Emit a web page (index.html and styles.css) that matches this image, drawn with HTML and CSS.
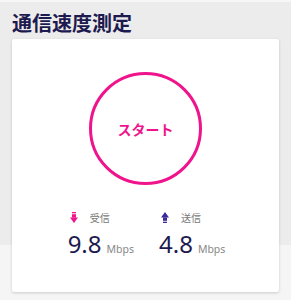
FILE: index.html
```html
<!DOCTYPE html>
<html lang="ja">
<head>
<meta charset="utf-8">
<link rel="stylesheet" href="styles.css">
</head>
<body>
<div class="page">
  <h1 class="title">通信速度測定</h1>
  <div class="card">
    <button class="start">スタート</button>
    <div class="stats">
      <div class="stat">
        <div class="label">
          <svg class="arrow" width="8" height="11" viewBox="0 0 8 11"><rect x="2" y="0" width="4" height="1.3" fill="#f0148c"/><rect x="2" y="2.2" width="4" height="3.4" fill="#f0148c"/><polygon points="0,5.6 8,5.6 4,11" fill="#f0148c"/></svg>
          <span>受信</span>
        </div>
        <div class="value"><span class="num">9.8</span><span class="unit">Mbps</span></div>
      </div>
      <div class="stat">
        <div class="label">
          <svg class="arrow" width="8" height="11" viewBox="0 0 8 11"><polygon points="4,0 8,5.4 0,5.4" fill="#3c2a9a"/><rect x="2" y="5.4" width="4" height="3.4" fill="#3c2a9a"/><rect x="2" y="9.7" width="4" height="1.3" fill="#3c2a9a"/></svg>
          <span>送信</span>
        </div>
        <div class="value"><span class="num">4.8</span><span class="unit">Mbps</span></div>
      </div>
    </div>
  </div>
</div>
</body>
</html>
```
FILE: styles.css
```css
html, body {
  margin: 0;
  padding: 0;
}
body {
  width: 291px;
  height: 300px;
  overflow: hidden;
  background: linear-gradient(#ececec 0, #ececec 245px, #f5f5f5 245px);
  font-family: "Noto Sans CJK JP", "Noto Sans", sans-serif;
}
.page {
  padding: 0 12px;
  border-top: 2px solid #f6f6f6;
}
.title {
  margin: 0;
  padding-top: 8px;
  height: 29px;
  font-size: 20px;
  line-height: 26px;
  font-weight: 700;
  color: #1d1a4f;
  letter-spacing: 0;
}
.card {
  background: #fff;
  height: 253px;
  border-radius: 2px;
  box-shadow: 0 1px 3px rgba(0,0,0,0.18);
  display: flex;
  flex-direction: column;
  align-items: center;
}
.start {
  margin-top: 33px;
  width: 113px;
  height: 113px;
  border-radius: 50%;
  border: 3px solid #f0148c;
  background: #fff;
  color: #f0148c;
  font-family: "Noto Sans CJK JP", sans-serif;
  font-size: 14px;
  font-weight: 700;
  padding: 0;
}
.stats {
  margin-top: 25px;
  display: flex;
  gap: 25px;
  margin-left: 2px;
}
.stat {
  display: flex;
  flex-direction: column;
}
.label {
  display: flex;
  align-items: center;
  gap: 12px;
  padding-left: 2px;
  font-size: 10px;
  color: #777;
  height: 14px;
}
.arrow {
  display: block;
}
.value {
  margin-top: 6px;
  display: flex;
  align-items: baseline;
  gap: 5px;
}
.num {
  font-family: "Noto Sans", sans-serif;
  font-size: 24px;
  line-height: 27px;
  color: #1d1a4f;
}
.unit {
  font-family: "Noto Sans", sans-serif;
  font-size: 10.5px;
  color: #888;
}
```
